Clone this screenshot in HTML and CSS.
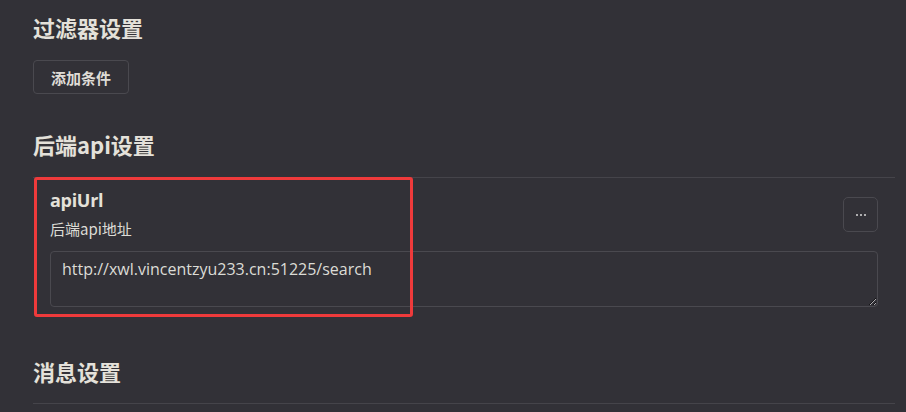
FILE: index.html
```html
<!DOCTYPE html>
<html lang="zh-CN">
<head>
<meta charset="utf-8">
<title>设置</title>
<link rel="stylesheet" href="styles.css">
</head>
<body>
<div class="settings">
  <h3 class="section-title first">过滤器设置</h3>
  <button class="btn">添加条件</button>

  <h3 class="section-title">后端api设置</h3>
  <div class="setting-item">
    <div class="setting-row">
      <div class="info">
        <div class="name">apiUrl</div>
        <div class="desc">后端api地址</div>
      </div>
      <button class="more-btn" aria-label="更多">
        <svg width="12" height="4" viewBox="0 0 12 4"><circle cx="2" cy="2" r="1" fill="#d8d8d8"/><circle cx="6" cy="2" r="1" fill="#d8d8d8"/><circle cx="10" cy="2" r="1" fill="#d8d8d8"/></svg>
      </button>
    </div>
    <textarea class="input" spellcheck="false">http://xwl.vincentzyu233.cn:51225/search</textarea>
    <div class="highlight"></div>
  </div>

  <h3 class="section-title last">消息设置</h3>
  <div class="setting-item empty"></div>
</div>
</body>
</html>
```

FILE: styles.css
```css
html, body {
  margin: 0;
  padding: 0;
  background: #323137;
  height: 100%;
  overflow: hidden;
}

.settings {
  padding: 0 11px 0 33px;
  font-family: "Open Sans", "Noto Sans CJK SC", sans-serif;
  color: #dcdcd6;
}

.section-title {
  margin: 35px 0 18px;
  font-family: "Noto Sans CJK SC", sans-serif;
  font-size: 22px;
  line-height: 30px;
  font-weight: 700;
  color: #e4e1da;
}

.section-title.first {
  margin-top: 12px;
  margin-bottom: 18px;
}

.section-title.last {
  margin-top: 34px;
  margin-bottom: 17px;
}

.btn {
  display: block;
  height: 34px;
  width: 96px;
  padding: 0;
  background: transparent;
  border: 1px solid #4a494f;
  border-radius: 4px;
  color: #dfdcd6;
  font-family: "Noto Sans CJK SC", sans-serif;
  font-size: 15px;
  font-weight: 700;
}

.setting-item {
  position: relative;
  border-top: 1px solid #45444a;
  padding: 10px 17px 15px 17px;
}

.setting-item.empty {
  padding: 0;
  height: 20px;
}

.setting-row {
  display: flex;
  align-items: center;
  justify-content: space-between;
}

.name {
  font-size: 18px;
  line-height: 24px;
  font-weight: 700;
  color: #e4e1da;
  letter-spacing: -0.3px;
}

.desc {
  margin-top: 7px;
  font-family: "Noto Sans CJK SC", sans-serif;
  font-size: 15px;
  line-height: 20px;
  color: #dcdcd6;
}

.more-btn {
  width: 35px;
  height: 35px;
  margin-top: 2px;
  padding: 0;
  display: flex;
  align-items: center;
  justify-content: center;
  background: transparent;
  border: 1px solid #4a494f;
  border-radius: 5px;
}

.input {
  display: block;
  box-sizing: border-box;
  width: 100%;
  height: 56px;
  margin-top: 12px;
  padding: 6px 11px;
  background: #323137;
  border: 1px solid #4a494f;
  border-radius: 4px;
  color: #dcdcd6;
  font-family: "Open Sans", sans-serif;
  font-size: 16px;
  line-height: 22px;
  outline: none;
}

.highlight {
  position: absolute;
  left: 1px;
  top: -1px;
  width: 379px;
  height: 140px;
  box-sizing: border-box;
  border: 3px solid #ee3a3b;
  border-radius: 3px;
  pointer-events: none;
}
```
